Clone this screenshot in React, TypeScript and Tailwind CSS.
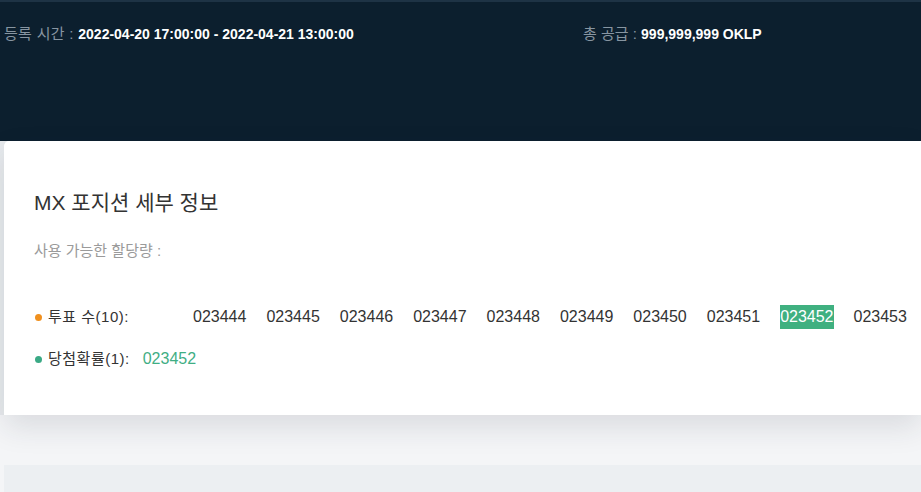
const tickets = ["023444", "023445", "023446", "023447", "023448", "023449", "023450", "023451", "023452", "023453"];
const winner = "023452";

export default function App() {
  return (
    <div
      className="relative w-full h-[492px] overflow-hidden bg-[#f4f5f7]"
      style={{ fontFamily: '"Liberation Sans", "Noto Sans CJK KR", sans-serif' }}
    >
      {/* Dark header */}
      <div className="h-[190px] bg-[#0c1f2e] border-t-2 border-[#1e3345]">
        <div className="flex items-center pt-[22px] text-[14px] leading-[20px]">
          <div className="w-[583px] shrink-0 pl-[4px] whitespace-nowrap">
            <span className="text-[15px] text-[#8795a1] tracking-[0.3px]">등록 시간 : </span>
            <span className="font-bold text-white">2022-04-20 17:00:00 - 2022-04-21 13:00:00</span>
          </div>
          <div className="whitespace-nowrap">
            <span className="text-[15px] text-[#8795a1]">총 공급 : </span>
            <span className="font-bold text-white">999,999,999 OKLP</span>
          </div>
        </div>
      </div>

      {/* Page body */}
      <div className="bg-[#e7eaed] pl-[4px]">
        <div className="-mt-[49px] h-[274px] bg-white rounded-tl-[5px] pl-[30px] pt-[48px] shadow-[0_12px_30px_rgba(30,40,60,0.12)] relative">
          <h2 className="text-[21px] leading-[28px] text-[#333333]">MX 포지션 세부 정보</h2>
          <p className="mt-[24px] text-[15px] leading-[20px] text-[#9a9a9a]">사용 가능한 할당량 :</p>

          <div className="mt-[44px] flex items-center text-[16px] leading-[24px] text-[#333333] whitespace-nowrap">
            <div className="w-[159px] shrink-0 flex items-center text-[15px]">
              <span className="w-[7px] h-[7px] shrink-0 rounded-full bg-[#f0901e] ml-[1px] mr-[6px]" />
              <span className="tracking-[0.5px]">투표 수(10):</span>
            </div>
            {tickets.map((t) =>
              t === winner ? (
                <span key={t} className="shrink-0 mr-[20px] bg-[#3fb080] text-white">
                  {t}
                </span>
              ) : (
                <span key={t} className="shrink-0 mr-[20px]">
                  {t}
                </span>
              )
            )}
          </div>

          <div className="mt-[18px] flex items-center text-[15px] leading-[24px] text-[#333333] whitespace-nowrap">
            <span className="w-[7px] h-[7px] shrink-0 rounded-full bg-[#3aa985] ml-[1px] mr-[6px]" />
            <span className="tracking-[0.5px]">당첨확률(1):</span>
            <span className="ml-[13px] text-[16px] text-[#3fae84]">{winner}</span>
          </div>
        </div>
      </div>

      <div className="bg-[#f4f5f7] h-[50px]" />
      <div className="ml-[4px] h-[40px] bg-[#eceff2]" />
    </div>
  );
}
